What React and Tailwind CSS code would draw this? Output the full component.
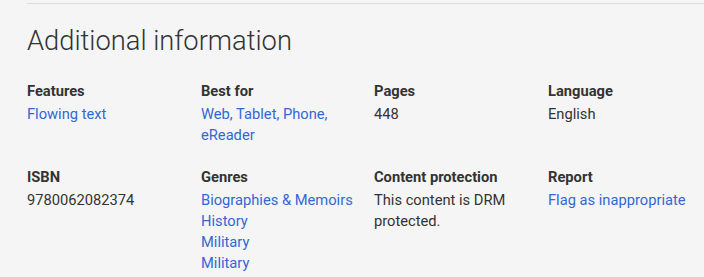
const rows = [
  [
    { label: "Features", values: ["Flowing text"], link: true },
    { label: "Best for", values: ["Web, Tablet, Phone, eReader"], link: true },
    { label: "Pages", values: ["448"] },
    { label: "Language", values: ["English"] },
  ],
  [
    { label: "ISBN", values: ["9780062082374"] },
    {
      label: "Genres",
      values: ["Biographies & Memoirs", "History", "Military", "Military"],
      link: true,
    },
    { label: "Content protection", values: ["This content is DRM protected."] },
    { label: "Report", values: ["Flag as inappropriate"], link: true },
  ],
];

function Item({ label, values, link }) {
  return (
    <div className="pr-4 last:pr-0">
      <div className="font-bold text-[14.7px] leading-[21px] mb-[2px] text-[#333]">{label}</div>
      {values.map((v, i) => (
        <div
          key={i}
          className={
            "text-[14.7px] leading-[21px] " + (link ? "text-[#3367d6]" : "text-[#333]")
          }
        >
          {v}
        </div>
      ))}
    </div>
  );
}

export default function App() {
  return (
    <div
      className="min-h-[277px] bg-[#f5f5f5] pt-[3px] pl-[27px]"
      style={{ fontFamily: "Roboto, 'Liberation Sans', sans-serif" }}
    >
      <div className="border-t border-[#dcdcdc]">
        <h2 className="font-light text-[27.3px] leading-[36px] text-[#333] pt-[19px]">
          Additional information
        </h2>
        <div className="mt-[22px] flex flex-col gap-[21px]">
          {rows.map((row, r) => (
            <div key={r} className="grid grid-cols-[174px_173px_174px_1fr]">
              {row.map((item) => (
                <Item key={item.label} {...item} />
              ))}
            </div>
          ))}
        </div>
      </div>
    </div>
  );
}
